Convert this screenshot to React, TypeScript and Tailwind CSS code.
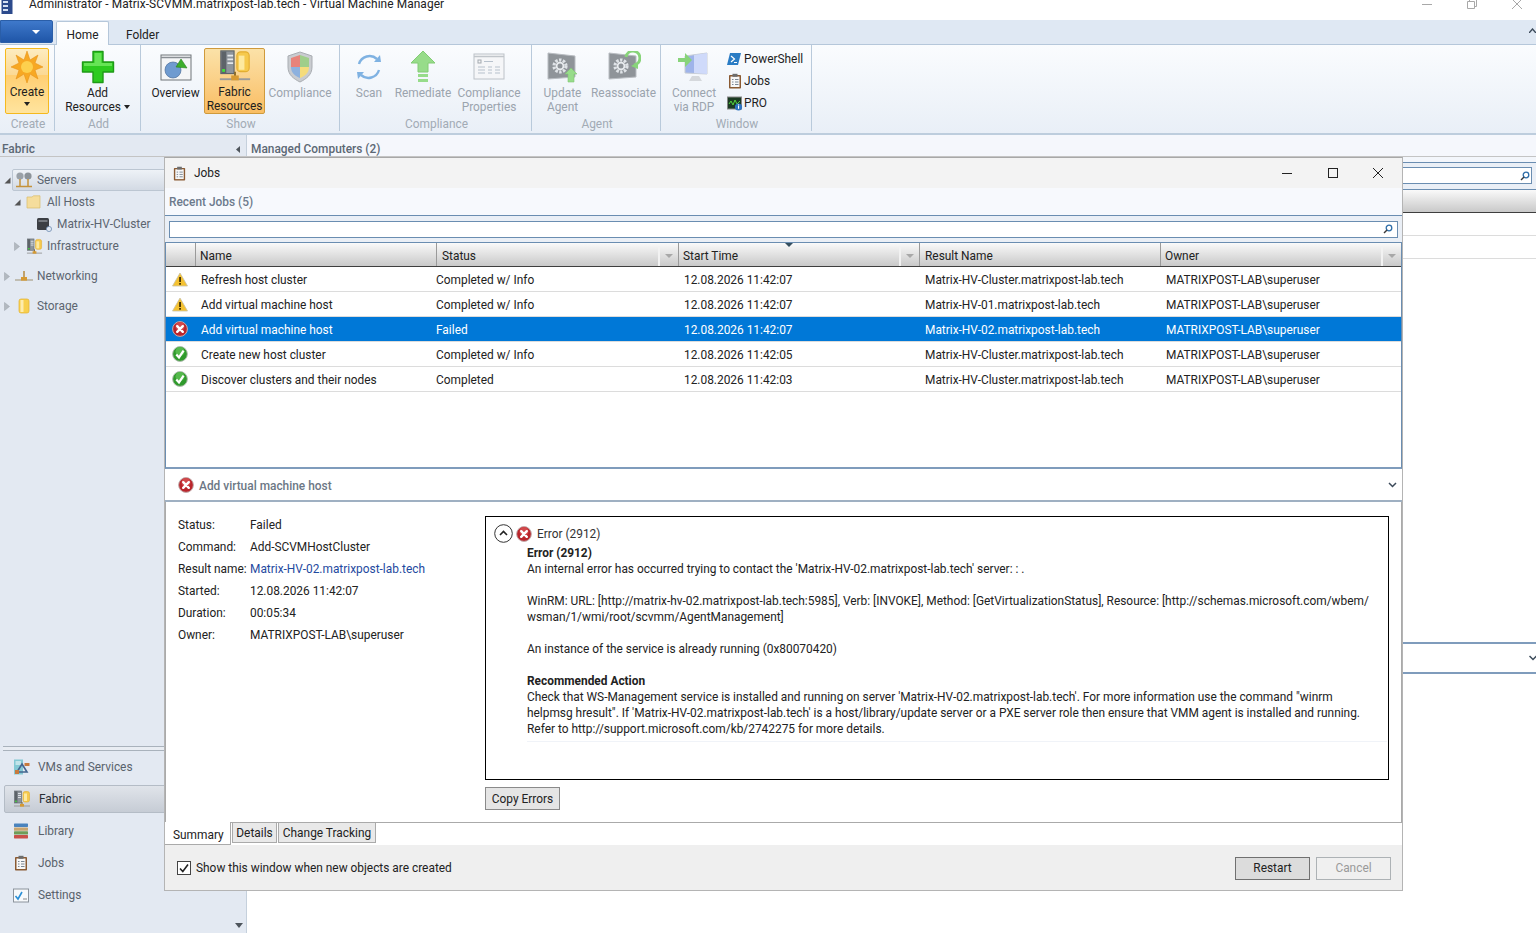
import React from "react";

type Status = "warn" | "error" | "ok";

const JOB_GRID = "grid grid-cols-[29px_241px_242px_241px_241px_1fr]";

const jobs: { status: Status; name: string; state: string; start: string; result: string }[] = [
  { status: "warn", name: "Refresh host cluster", state: "Completed w/ Info", start: "12.08.2026 11:42:07", result: "Matrix-HV-Cluster.matrixpost-lab.tech" },
  { status: "warn", name: "Add virtual machine host", state: "Completed w/ Info", start: "12.08.2026 11:42:07", result: "Matrix-HV-01.matrixpost-lab.tech" },
  { status: "error", name: "Add virtual machine host", state: "Failed", start: "12.08.2026 11:42:07", result: "Matrix-HV-02.matrixpost-lab.tech" },
  { status: "ok", name: "Create new host cluster", state: "Completed w/ Info", start: "12.08.2026 11:42:05", result: "Matrix-HV-Cluster.matrixpost-lab.tech" },
  { status: "ok", name: "Discover clusters and their nodes", state: "Completed", start: "12.08.2026 11:42:03", result: "Matrix-HV-Cluster.matrixpost-lab.tech" },
];

function StatusIcon({ status }: { status: Status }) {
  if (status === "warn")
    return (
      <svg width="16" height="15" viewBox="0 0 16 15">
        <path d="M8 1 L15.5 14 H0.5 Z" fill="#f5c231" stroke="#c9c2a8" strokeWidth="0.8" />
        <rect x="7.2" y="5" width="1.7" height="5" fill="#3a2a00" />
        <rect x="7.2" y="11" width="1.7" height="1.7" fill="#3a2a00" />
      </svg>
    );
  if (status === "error") return <ErrorIcon />;
  return (
    <svg width="16" height="16" viewBox="0 0 16 16">
      <circle cx="8" cy="8" r="7.4" fill="#2f9a2c" stroke="#b3bdb2" strokeWidth="1" />
      <circle cx="8" cy="5.5" r="4.5" fill="#55b94c" />
      <path d="M4.3 8.4 L7 11.4 L11.6 4.6" fill="none" stroke="#fff" strokeWidth="2.2" />
    </svg>
  );
}

function ErrorIcon() {
  return (
    <svg width="16" height="16" viewBox="0 0 16 16">
      <circle cx="8" cy="8" r="7.4" fill="#b9252b" stroke="#c2aeae" strokeWidth="1" />
      <circle cx="8" cy="5.5" r="4.5" fill="#d2484b" />
      <path d="M5.2 5.2 L10.8 10.8 M10.8 5.2 L5.2 10.8" stroke="#fff" strokeWidth="2.4" strokeLinecap="round" />
    </svg>
  );
}

function Clipboard({ size = 16 }: { size?: number }) {
  return (
    <svg width={size} height={size} viewBox="0 0 16 16">
      <rect x="2" y="2" width="12" height="13.5" rx="0.8" fill="#8a5a32" />
      <rect x="3.5" y="3.5" width="9" height="10.5" fill="#f7f7f7" />
      <rect x="5.5" y="0.8" width="5" height="3" fill="#6d6d6d" />
      <path d="M5 6.5 H6.5 M8 6.5 H11.5 M5 9 H6.5 M8 9 H11.5 M5 11.5 H6.5 M8 11.5 H11.5" stroke="#7b8794" strokeWidth="1" />
    </svg>
  );
}

function FabricIcon({ size = 18 }: { size?: number }) {
  return (
    <svg width={size} height={size} viewBox="0 0 18 18">
      <rect x="1.5" y="1" width="7" height="12" fill="#8e959c" stroke="#5f656b" strokeWidth="0.6" />
      <rect x="1.8" y="1.3" width="2.6" height="11.4" fill="#5d6369" />
      <path d="M5 3.5 H8 M5 5.5 H8 M5 7.5 H8" stroke="#e4e7ea" strokeWidth="0.9" />
      <rect x="2.2" y="10.6" width="1.5" height="1.5" fill="#41e03a" />
      <rect x="10" y="1.5" width="6.5" height="10.5" rx="2" fill="#f6c94c" stroke="#e3ae30" strokeWidth="0.6" />
      <rect x="11" y="3.5" width="3" height="7.5" fill="#fde99f" />
      <path d="M1 16 H17" stroke="#9a9a9a" strokeWidth="1" />
      <path d="M9 12 V15" stroke="#8a6a2a" strokeWidth="1" />
      <rect x="7" y="14" width="4" height="2.6" fill="#d69a33" />
    </svg>
  );
}

function TriangleOpen() {
  return (
    <svg width="7" height="7" viewBox="0 0 7 7">
      <path d="M6.5 0.5 V6.5 H0.5 Z" fill="#555" />
    </svg>
  );
}

function TriangleClosed() {
  return (
    <svg width="6" height="9" viewBox="0 0 6 9">
      <path d="M0.5 0.5 L5.5 4.5 L0.5 8.5 Z" fill="#b3b9c0" stroke="#9aa1a8" strokeWidth="0.5" />
    </svg>
  );
}

function Monitor({ children }: { children?: React.ReactNode }) {
  return (
    <svg width="34" height="32" viewBox="0 0 34 32">
      <path d="M2 2 L29 5 V26 L2 28 Z" fill="#8f9499" stroke="#b9bdc2" strokeWidth="1" />
      <circle cx="14" cy="15" r="6" fill="none" stroke="#dfe3e7" strokeWidth="3.2" strokeDasharray="2.4 1.4" />
      <circle cx="14" cy="15" r="3.4" fill="none" stroke="#e9ecef" strokeWidth="1.8" />
      {children}
    </svg>
  );
}

function RibbonButton({ icon, lines, disabled, className }: { icon: React.ReactNode; lines: React.ReactNode[]; disabled?: boolean; className: string }) {
  return (
    <div className={`flex flex-col items-center ${className} ${disabled ? "text-[#9ba4ae]" : "text-[#1e1e1e]"}`}>
      <div className="h-[37px] flex items-center justify-center">{icon}</div>
      <div className="leading-[13.5px] text-center whitespace-nowrap mt-[2px]">
        {lines.map((l, i) => (
          <div key={i}>{l}</div>
        ))}
      </div>
    </div>
  );
}

function RibbonGroup({ label, className, children }: { label: string; className: string; children: React.ReactNode }) {
  return (
    <div className={`flex flex-col shrink-0 ${className}`}>
      <div className="h-[72px] shrink-0 flex items-start pt-[3px] border-r border-[#b9cadb]">{children}</div>
      <div className="h-[14px] shrink-0 leading-[14px] text-center pl-[2px] text-[#a2abb5] border-r border-[#b9cadb]">{label}</div>
    </div>
  );
}

function Ribbon() {
  return (
    <div className="h-[90px] shrink-0 flex bg-gradient-to-b from-[#fafcfe] to-[#e9eff7] border-b-[2px] border-[#bdcddd]">
      <RibbonGroup label="Create" className="w-[55px]">
        <div className="ml-[5px] w-[44px] h-[66px] rounded-[2px] border border-[#f5b91e] bg-[linear-gradient(#fdecc0_0%,#fbd994_40%,#ffcf73_41%,#ffe49e_100%)] flex flex-col items-center text-[#1e1e1e]">
          <svg width="34" height="34" viewBox="0 0 34 34" className="mt-[1px]">
            <path d="M17 1 L20 10 L28 5 L25 13 L33 17 L25 20 L28 29 L20 24 L17 33 L14 24 L6 29 L9 20 L1 17 L9 13 L6 5 L14 10 Z" fill="#f7a823" stroke="#e28a12" strokeWidth="0.5" />
            <circle cx="17" cy="17" r="6" fill="#fdd04e" />
          </svg>
          <div className="leading-[14px] mt-[1px]">Create</div>
          <svg width="6" height="4" viewBox="0 0 6 4" className="mt-[3px]">
            <path d="M0 0 H6 L3 4 Z" fill="#222" />
          </svg>
        </div>
      </RibbonGroup>
      <RibbonGroup label="Add" className="w-[86px]">
        <RibbonButton
          className="w-[86px]"
          icon={
            <svg width="34" height="34" viewBox="0 0 34 34">
              <path d="M12 1.5 H22 V12 H32.5 V22 H22 V32.5 H12 V22 H1.5 V12 H12 Z" fill="#2dcb1f" stroke="#1f9a17" strokeWidth="1.4" strokeLinejoin="round" />
              <path d="M13.5 3 H20.5 V13 H31 V16 H3 V13 H13.5 Z" fill="#66e455" />
            </svg>
          }
          lines={[
            "Add",
            <span className="inline-flex items-center gap-[3px]">
              Resources
              <svg width="6" height="4" viewBox="0 0 6 4">
                <path d="M0 0 H6 L3 4 Z" fill="#222" />
              </svg>
            </span>,
          ]}
        />
      </RibbonGroup>
      <RibbonGroup label="Show" className="w-[199px]">
        <RibbonButton
          className="w-[57px] ml-[6px]"
          icon={
            <svg width="32" height="28" viewBox="0 0 32 28">
              <rect x="1" y="2" width="30" height="25" fill="#f5f6f7" stroke="#6f7478" />
              <path d="M1 4.5 H31" stroke="#8a8f94" strokeWidth="1.5" />
              <circle cx="13" cy="17" r="8" fill="#6f9bd0" stroke="#4d6f99" strokeWidth="0.7" />
              <path d="M16 14 L21 6 L27 15 Z" fill="#3cae2b" stroke="#2a7f1f" strokeWidth="0.6" />
            </svg>
          }
          lines={["Overview"]}
        />
        <div className="w-[61px] h-[66px] rounded-[2px] border border-[#cf9a3c] bg-gradient-to-b from-[#fbe2a8] to-[#f9bd62] flex flex-col items-center text-[#1e1e1e]">
          <FabricIcon size={34} />
          <div className="leading-[13.5px] text-center mt-[3px]">
            <div>Fabric</div>
            <div>Resources</div>
          </div>
        </div>
        <RibbonButton
          disabled
          className="w-[70px]"
          icon={
            <svg width="28" height="32" viewBox="0 0 28 32">
              <path d="M14 1 L26 5 V16 C26 24 20 28 14 31 C8 28 2 24 2 16 V5 Z" fill="#c9ccd0" stroke="#a9adb2" />
              <path d="M14 4 V16 H5 V7 Z" fill="#e8837a" />
              <path d="M14 4 L23 7 V16 H14 Z" fill="#9fce8a" />
              <path d="M5 16 H14 V27 C9 25 5 22 5 16 Z" fill="#8db1de" />
              <path d="M14 16 H23 C23 22 19 25 14 27 Z" fill="#f5dc7b" />
            </svg>
          }
          lines={["Compliance"]}
        />
      </RibbonGroup>
      <RibbonGroup label="Compliance" className="w-[192px]">
        <RibbonButton
          disabled
          className="w-[58px]"
          icon={
            <svg width="28" height="28" viewBox="0 0 28 28">
              <path d="M4 11 A11 11 0 0 1 22 6" fill="none" stroke="#7fb2e2" strokeWidth="2.4" />
              <path d="M24 17 A11 11 0 0 1 6 22" fill="none" stroke="#7fb2e2" strokeWidth="2.4" />
              <path d="M19 9 L26 9 L25 2 Z M9 19 L2 19 L3 26 Z" fill="#7fb2e2" />
            </svg>
          }
          lines={["Scan"]}
        />
        <RibbonButton
          disabled
          className="w-[50px]"
          icon={
            <svg width="26" height="34" viewBox="0 0 26 34">
              <path d="M13 1 L25 13 H18 V22 H8 V13 H1 Z" fill="#97dc8a" stroke="#82cc75" />
              <rect x="8" y="24" width="10" height="3" fill="#97dc8a" />
              <rect x="8" y="29" width="10" height="3" fill="#97dc8a" />
            </svg>
          }
          lines={["Remediate"]}
        />
        <RibbonButton
          disabled
          className="w-[82px]"
          icon={
            <svg width="32" height="27" viewBox="0 0 32 27">
              <rect x="1" y="1" width="30" height="25" fill="#f5f6f8" stroke="#bcc2c8" />
              <path d="M1 3.5 H31" stroke="#c0c5ca" strokeWidth="1.5" />
              <rect x="5" y="7" width="3" height="3" fill="none" stroke="#a3a9af" />
              <path d="M11 8.5 H20 M5 14 H12 M15 14 H19 M22 14 H27 M5 17 H12 M15 17 H19 M22 17 H27 M5 20 H12 M15 20 H19 M22 20 H27" stroke="#b7c1cc" strokeWidth="1" />
            </svg>
          }
          lines={["Compliance", "Properties"]}
        />
      </RibbonGroup>
      <RibbonGroup label="Agent" className="w-[129px]">
        <RibbonButton
          disabled
          className="w-[61px]"
          icon={
            <Monitor>
              <path d="M25 17 L31 23 H28 V31 H22 V23 H19 Z" fill="#97dc8a" stroke="#7fc872" strokeWidth="0.6" />
            </Monitor>
          }
          lines={["Update", "Agent"]}
        />
        <RibbonButton
          disabled
          className="w-[61px]"
          icon={
            <Monitor>
              <path d="M19 6 A7 7 0 1 1 27 14" fill="none" stroke="#88d47a" strokeWidth="3" />
              <path d="M24 15 L31 11 L31 18 Z" fill="#88d47a" />
            </Monitor>
          }
          lines={["Reassociate"]}
        />
      </RibbonGroup>
      <RibbonGroup label="Window" className="w-[151px]">
        <RibbonButton
          disabled
          className="w-[66px]"
          icon={
            <svg width="34" height="34" viewBox="0 0 34 34">
              <path d="M8 6 L30 3 V24 L8 23 Z" fill="#9fb4ea" stroke="#c9ced4" />
              <path d="M17 5 L30 3 V24 L17 23 Z" fill="#cfdafa" />
              <path d="M15 26 H22 L25 31 H12 Z" fill="#d5d8dc" />
              <path d="M1 8 H8 V3 L15 10 L8 17 V12 H1 Z" fill="#88d47a" />
            </svg>
          }
          lines={["Connect", "via RDP"]}
        />
        <div className="flex flex-col text-[#1e1e1e]">
          <div className="h-[22px] flex items-center gap-[3px]">
            <svg width="14" height="14" viewBox="0 0 14 14">
              <path d="M3 1 H14 L11 13 H0 Z" fill="#2a7cc4" />
              <path d="M4 4 L7.5 7 L4 10 M7 10.5 H10" fill="none" stroke="#fff" strokeWidth="1.2" />
            </svg>
            PowerShell
          </div>
          <div className="h-[22px] flex items-center gap-[1px]">
            <Clipboard />
            Jobs
          </div>
          <div className="h-[22px] flex items-center gap-[1px]">
            <svg width="16" height="15" viewBox="0 0 16 15">
              <rect x="0.5" y="1" width="14" height="12" fill="#1b3a22" stroke="#888" />
              <path d="M2 8 L4 5 L6 9 L8 4 L10 8 L13 5" fill="none" stroke="#52d33d" strokeWidth="1" />
              <circle cx="11.5" cy="11" r="3.6" fill="#2f74c0" />
              <rect x="11" y="9.8" width="1.1" height="3" fill="#fff" />
              <rect x="11" y="8.4" width="1.1" height="1" fill="#fff" />
            </svg>
            PRO
          </div>
        </div>
      </RibbonGroup>
    </div>
  );
}

function TreeRow({ pad, arrow, icon, label, selected, className = "" }: { pad: string; arrow?: React.ReactNode; icon: React.ReactNode; label: string; selected?: boolean; className?: string }) {
  return (
    <div className={`h-[22px] flex items-center ${pad} ${className}`}>
      <div className="w-[10px] flex justify-center shrink-0">{arrow}</div>
      <div
        className={`flex-1 h-full flex items-center gap-[3px] pl-[1px] whitespace-nowrap text-[#5c6570] border ${
          selected ? "border-[#bcc6d2] rounded-l-[2px] bg-gradient-to-b from-[#eef2f7] to-[#d3dae4]" : "border-transparent"
        }`}
      >
        <div className="w-[20px] h-[18px] flex items-center justify-center shrink-0">{icon}</div>
        {label}
      </div>
    </div>
  );
}

function NavRow({ icon, label, selected }: { icon: React.ReactNode; label: string; selected?: boolean }) {
  return (
    <div className="h-[32px] flex items-center pl-[4px]">
      <div
        className={`flex-1 h-[28px] flex items-center pl-[8px] gap-[8px] ${
          selected ? "border border-[#b4bcc6] rounded-l-[2px] bg-gradient-to-b from-[#e0e4ea] to-[#c6ccd5] text-[#2a2f35]" : "text-[#59626c]"
        }`}
      >
        <div className="w-[18px] h-[18px] flex items-center justify-center shrink-0">{icon}</div>
        {label}
      </div>
    </div>
  );
}

function Sidebar() {
  return (
    <div className="w-[247px] shrink-0 bg-[#e3e9f2] border-r border-[#c5d0dc] flex flex-col">
      <div className="pt-[12px]">
        <TreeRow
          pad="pl-[2px]"
          selected
          arrow={<TriangleOpen />}
          label="Servers"
          icon={
            <svg width="18" height="18" viewBox="0 0 18 18">
              <circle cx="5" cy="5" r="3.6" fill="#9aa1a8" />
              <circle cx="13" cy="5" r="3.6" fill="#8c9399" />
              <path d="M5 8 V15 M13 8 V15 M1 15.5 H17" stroke="#c5923a" strokeWidth="1.5" />
            </svg>
          }
        />
        <TreeRow
          pad="pl-[12px]"
          arrow={<TriangleOpen />}
          label="All Hosts"
          icon={
            <svg width="16" height="14" viewBox="0 0 16 14">
              <path d="M1 2 H6 L7.5 0.8 H14 V13 H1 Z" fill="#f5dd9c" stroke="#d8bb6c" strokeWidth="0.7" />
            </svg>
          }
        />
        <TreeRow
          pad="pl-[22px]"
          label="Matrix-HV-Cluster"
          icon={
            <svg width="16" height="16" viewBox="0 0 16 16">
              <rect x="1" y="2" width="12" height="12" rx="1.5" fill="#3c3f44" />
              <rect x="2.5" y="4" width="9" height="2" fill="#75797f" />
              <circle cx="13" cy="13" r="2.6" fill="#dfe7f2" stroke="#6484ac" strokeWidth="0.7" />
            </svg>
          }
        />
        <TreeRow pad="pl-[12px]" arrow={<TriangleClosed />} label="Infrastructure" icon={<FabricIcon size={17} />} />
        <TreeRow
          pad="pl-[2px]"
          arrow={<TriangleClosed />}
          label="Networking"
          className="mt-[8px]"
          icon={
            <svg width="18" height="12" viewBox="0 0 18 12">
              <path d="M0 10 H18" stroke="#a9a088" strokeWidth="1.2" />
              <path d="M9 1 V8" stroke="#b28534" strokeWidth="1.4" />
              <rect x="6" y="7" width="6" height="3.6" fill="#d69a33" />
            </svg>
          }
        />
        <TreeRow
          pad="pl-[2px]"
          arrow={<TriangleClosed />}
          label="Storage"
          className="mt-[8px]"
          icon={
            <svg width="12" height="16" viewBox="0 0 12 16">
              <rect x="1" y="1" width="10" height="14" rx="2" fill="#f8d04f" stroke="#e4b12e" strokeWidth="0.7" />
              <rect x="2.5" y="2" width="3" height="12" fill="#fdecae" />
            </svg>
          }
        />
      </div>
      <div className="flex-1" />
      <div className="h-[5px] mx-[3px] border-y border-[#a9b2bc] bg-[#e9edf3]" />
      <NavRow
        label="VMs and Services"
        icon={
          <svg width="17" height="16" viewBox="0 0 17 16">
            <rect x="1" y="0.5" width="9" height="15" fill="#84c9d4" />
            <path d="M2.5 3 H8 M2.5 5 H8" stroke="#fff" strokeWidth="1" />
            <path d="M9 5 L14 13 H4 Z" fill="none" stroke="#44658f" strokeWidth="1.6" />
            <rect x="11.5" y="4" width="5" height="3" fill="#c77a3d" />
            <rect x="2" y="11" width="4" height="4" fill="#c77a3d" />
          </svg>
        }
      />
      <NavRow label="Fabric" selected icon={<FabricIcon />} />
      <NavRow
        label="Library"
        icon={
          <svg width="16" height="16" viewBox="0 0 16 16">
            <rect x="1" y="0.5" width="14" height="3.4" rx="0.6" fill="#4a83bd" />
            <rect x="1" y="4.4" width="14" height="3.4" rx="0.6" fill="#c9a56f" />
            <rect x="1" y="8.3" width="14" height="3.2" rx="0.6" fill="#6f9c57" />
            <rect x="1" y="12" width="14" height="3.4" rx="0.6" fill="#c9504a" />
          </svg>
        }
      />
      <NavRow label="Jobs" icon={<Clipboard />} />
      <NavRow
        label="Settings"
        icon={
          <svg width="16" height="15" viewBox="0 0 16 15">
            <rect x="0.5" y="1" width="15" height="13" fill="#f7f9fb" stroke="#8b939c" />
            <path d="M2.5 8 L5 11 L9 4" fill="none" stroke="#2a8fd6" strokeWidth="1.6" />
            <path d="M10 11 H14" stroke="#888" strokeWidth="1" />
          </svg>
        }
      />
      <div className="h-[22px] flex justify-end items-end pb-[5px] pr-[3px]">
        <svg width="8" height="5" viewBox="0 0 8 5">
          <path d="M0 0 H8 L4 5 Z" fill="#4e555c" />
        </svg>
      </div>
    </div>
  );
}

function HeaderCell({ label, className, filter = true }: { label: string; className: string; filter?: boolean }) {
  return (
    <div className={`flex items-center justify-between border-l border-[#9a9a9a] text-[#222] ${className}`}>
      <span className="pt-[2px]">{label}</span>
      {filter && (
        <div className="w-[20px] h-[20px] mt-[2px] flex items-center justify-center border-l-[2px] border-[#f2f2f2]">
          <svg width="8" height="4" viewBox="0 0 8 4">
            <path d="M0 0 H8 L4 4 Z" fill="#a8a8a8" />
          </svg>
        </div>
      )}
    </div>
  );
}

function SearchGlass() {
  return (
    <svg width="10" height="10" viewBox="0 0 10 10">
      <circle cx="6" cy="4" r="2.8" fill="none" stroke="#2d6da8" strokeWidth="1.3" />
      <path d="M4 6 L1 9" stroke="#3a3a3a" strokeWidth="1.5" />
    </svg>
  );
}

function JobsWindow() {
  return (
    <div className="absolute left-[164px] top-[157px] w-[1239px] h-[734px] bg-white border border-[#b4b4b4] border-t-[#a8a8a8] flex flex-col text-[#222]">
      <div className="h-[30px] shrink-0 bg-[#f3f3f3] flex items-center pl-[7px]">
        <Clipboard size={15} />
        <span className="ml-[7px]">Jobs</span>
        <div className="ml-auto flex items-center">
          <svg width="46" height="12" viewBox="0 0 46 12">
            <path d="M1 6.5 H11" stroke="#222" strokeWidth="1" />
          </svg>
          <svg width="45" height="12" viewBox="0 0 45 12">
            <rect x="1.5" y="1.5" width="9" height="9" fill="none" stroke="#222" strokeWidth="1" />
          </svg>
          <svg width="30" height="12" viewBox="0 0 30 12">
            <path d="M1 1 L11 11 M11 1 L1 11" stroke="#222" strokeWidth="1" />
          </svg>
        </div>
      </div>
      <div className="h-[27px] shrink-0 bg-[#f7f9fd] flex items-center pl-[4px] text-[#6c7a8c] font-medium">Recent Jobs (5)</div>
      <div className="h-[28px] shrink-0 bg-[#eaeff6] border-y border-[#6a8db1] px-[4px] flex items-center">
        <div className="w-full h-[17px] bg-white border border-[#6a8db1] flex items-center justify-end pr-[4px]">
          <SearchGlass />
        </div>
      </div>
      <div className="h-[226px] shrink-0 border-x border-b-[2px] border-[#6a8db1] border-b-[#7f9cbc] flex flex-col">
        <div className={`${JOB_GRID} relative h-[24px] bg-gradient-to-b from-[#fafafa] to-[#c9c9c9] border-b border-[#3e3e3e]`}>
          <div />
          <HeaderCell label="Name" className="pl-[4px]" filter={false} />
          <HeaderCell label="Status" className="pl-[5px]" />
          <HeaderCell label="Start Time" className="pl-[4px]" />
          <HeaderCell label="Result Name" className="pl-[5px]" filter={false} />
          <HeaderCell label="Owner" className="pl-[4px]" />
          <svg width="8" height="4" viewBox="0 0 8 4" className="absolute left-[619px] top-0">
            <path d="M0 0 H8 L4 4 Z" fill="#354f5f" />
          </svg>
        </div>
        {jobs.map((job, i) => (
          <div
            key={i}
            className={`${JOB_GRID} h-[25px] items-center border-b border-[#dcdcdc] whitespace-nowrap ${
              job.status === "error" ? "bg-[#0078d7] text-white" : "text-[#222]"
            }`}
          >
            <div className="flex justify-center pr-[1px]">
              <StatusIcon status={job.status} />
            </div>
            <div className="pl-[6px] pt-[1px]">{job.name}</div>
            <div className="pt-[1px]">{job.state}</div>
            <div className="pl-[6px] pt-[1px]">{job.start}</div>
            <div className="pl-[6px] pt-[1px]">{job.result}</div>
            <div className="pl-[6px] pt-[1px]">MATRIXPOST-LAB\superuser</div>
          </div>
        ))}
      </div>
      <div className="h-[33px] shrink-0 flex items-center pl-[13px] pr-[5px] border-b-[2px] border-[#9fb0c2] gap-[5px]">
        <ErrorIcon />
        <span className="text-[#6c7785] font-medium pt-[3px]">Add virtual machine host</span>
        <svg width="9" height="6" viewBox="0 0 9 6" className="ml-auto">
          <path d="M1 1 L4.5 4.5 L8 1" fill="none" stroke="#3c4a5a" strokeWidth="1.5" />
        </svg>
      </div>
      <div className="h-[321px] shrink-0 flex border-b border-x border-[#aaaaaa] pl-[12px] pt-[11px]">
        <div className="w-[307px] shrink-0 pt-[1px]">
          {[
            ["Status:", "Failed"],
            ["Command:", "Add-SCVMHostCluster"],
            ["Result name:", "Matrix-HV-02.matrixpost-lab.tech"],
            ["Started:", "12.08.2026 11:42:07"],
            ["Duration:", "00:05:34"],
            ["Owner:", "MATRIXPOST-LAB\\superuser"],
          ].map(([k, v]) => (
            <div key={k} className="h-[22px] flex items-center whitespace-nowrap">
              <div className="w-[72px] shrink-0">{k}</div>
              <div className={k === "Result name:" ? "text-[#1f4aa0]" : ""}>{v}</div>
            </div>
          ))}
        </div>
        <div className="w-[904px] shrink-0 pt-[3px]">
          <div className="h-[264px] border border-black">
            <div className="h-[28px] flex items-center pl-[8px] pt-[5px] gap-[3px]">
              <svg width="19" height="19" viewBox="0 0 19 19">
                <circle cx="9.5" cy="9.5" r="8.8" fill="#fff" stroke="#333" strokeWidth="1" />
                <path d="M6 11 L9.5 7.5 L13 11" fill="none" stroke="#222" strokeWidth="1.6" />
              </svg>
              <ErrorIcon />
              <span className="ml-[2px] text-[#333]">Error (2912)</span>
            </div>
            <div className="ml-[41px] mr-[1px] leading-[16px] border-b border-[#f0f3f8] pb-[4px] whitespace-nowrap text-[#222]">
              <div className="font-bold">Error (2912)</div>
              <div>An internal error has occurred trying to contact the 'Matrix-HV-02.matrixpost-lab.tech' server: : .</div>
              <div className="h-[16px]" />
              <div>WinRM: URL: [http://matrix-hv-02.matrixpost-lab.tech:5985], Verb: [INVOKE], Method: [GetVirtualizationStatus], Resource: [http://schemas.microsoft.com/wbem/</div>
              <div>wsman/1/wmi/root/scvmm/AgentManagement]</div>
              <div className="h-[16px]" />
              <div>An instance of the service is already running (0x80070420)</div>
              <div className="h-[16px]" />
              <div className="font-bold">Recommended Action</div>
              <div>Check that WS-Management service is installed and running on server 'Matrix-HV-02.matrixpost-lab.tech'. For more information use the command "winrm</div>
              <div>helpmsg hresult". If 'Matrix-HV-02.matrixpost-lab.tech' is a host/library/update server or a PXE server role then ensure that VMM agent is installed and running.</div>
              <div>Refer to http://support.microsoft.com/kb/2742275 for more details.</div>
            </div>
          </div>
          <button className="mt-[7px] w-[75px] h-[23px] bg-[#e5e5e5] border border-[#8a8a8a] text-[#222]">Copy Errors</button>
        </div>
      </div>
      <div className="h-[22px] shrink-0 flex items-start">
        <div className="w-[66px] h-[23px] -mt-[1px] bg-white border-r border-b border-[#aaaaaa] flex items-center pl-[8px] pt-[4px]">Summary</div>
        <div className="ml-[1px] w-[45px] h-[21px] -mt-[1px] bg-[#e9e9e9] border border-[#aaaaaa] flex items-center justify-center">Details</div>
        <div className="ml-[1px] w-[98px] h-[21px] -mt-[1px] bg-[#e9e9e9] border border-[#aaaaaa] flex items-center justify-center">Change Tracking</div>
      </div>
      <div className="flex-1 bg-[#efefef] flex items-center pl-[12px] pr-[11px] pt-[1px]">
        <div className="w-[14px] h-[14px] border border-[#444] bg-white flex items-center justify-center">
          <svg width="12" height="12" viewBox="0 0 12 12">
            <path d="M2 6.5 L4.8 9.5 L10 2.5" fill="none" stroke="#222" strokeWidth="1.6" />
          </svg>
        </div>
        <span className="ml-[5px]">Show this window when new objects are created</span>
        <button className="ml-auto w-[75px] h-[23px] bg-[#dcdcdc] border border-[#707070] text-[#222]">Restart</button>
        <button className="ml-[6px] w-[75px] h-[23px] bg-[#f0f0f0] border border-[#adb2b5] text-[#9a9a9a]">Cancel</button>
      </div>
    </div>
  );
}

function BehindPane() {
  return (
    <div className="flex-1 flex flex-col bg-white">
      <div className="h-[6px] bg-[#f3f6fb] border-b border-[#6a8db1]" />
      <div className="h-[26px] bg-[#eaeff6] px-[4px] pt-[4px]">
        <div className="w-full h-[17px] bg-white border border-[#6a8db1] flex items-center justify-end pr-[1px]">
          <SearchGlass />
        </div>
      </div>
      <div className="h-[24px] border-t border-[#6a8db1] bg-gradient-to-b from-[#fafafa] to-[#c9c9c9] border-b border-b-[#3e3e3e]" />
      <div className="h-[23px] border-b border-[#dcdcdc]" />
      <div className="h-[23px] border-b border-[#dcdcdc]" />
      <div className="h-[383px]" />
      <div className="h-[32px] border-y-[2px] border-[#7f9cbc] flex items-center justify-end">
        <svg width="8" height="6" viewBox="0 0 8 6" className="-mr-[1px]">
          <path d="M0.5 1 L4 4.5 L7.5 1" fill="none" stroke="#3c4a5a" strokeWidth="1.5" />
        </svg>
      </div>
    </div>
  );
}

export default function App() {
  return (
    <div className="relative w-[1536px] h-[933px] overflow-hidden bg-white flex flex-col text-[11.9px] leading-[16px] font-['Roboto',sans-serif]">
      <div className="h-[20px] shrink-0 bg-white flex items-start relative">
        <svg width="12" height="15" viewBox="0 0 12 15" className="ml-[1px] -mt-[1px]">
          <rect x="0.5" y="0" width="11" height="15" fill="#2c4a8c" />
          <rect x="2" y="2" width="5" height="2" fill="#d5e0f2" />
          <rect x="2" y="6" width="5" height="2" fill="#d5e0f2" />
          <rect x="2" y="10" width="5" height="2" fill="#d5e0f2" />
        </svg>
        <span className="ml-[16px] -mt-[4px] text-[#222] tracking-[0.085px]">Administrator - Matrix-SCVMM.matrixpost-lab.tech - Virtual Machine Manager</span>
        <div className="ml-auto flex items-center -mt-[1px] pr-[14px] gap-[35px]">
          <svg width="10" height="10" viewBox="0 0 10 10">
            <path d="M0 5.5 H10" stroke="#a8a8a8" />
          </svg>
          <svg width="10" height="10" viewBox="0 0 10 10">
            <path d="M2.5 2.5 V0.5 H9.5 V7.5 H7.5 M0.5 2.5 H7.5 V9.5 H0.5 Z" fill="none" stroke="#a8a8a8" />
          </svg>
          <svg width="10" height="10" viewBox="0 0 10 10">
            <path d="M0 0 L10 10 M10 0 L0 10" stroke="#a8a8a8" />
          </svg>
        </div>
      </div>
      <div className="h-[25px] shrink-0 bg-[#dfe8f3] flex items-end border-b border-[#b5c7da] relative">
        <div className="w-[53px] h-[23px] mb-[1px] rounded-r-[2px] bg-gradient-to-b from-[#3f79cb] to-[#1f56a8] border border-[#2a5ea8] flex items-center justify-end pr-[12px]">
          <svg width="8" height="4" viewBox="0 0 8 4">
            <path d="M0 0 H8 L4 4 Z" fill="#fff" />
          </svg>
        </div>
        <div className="ml-[3px] w-[53px] h-[24px] -mb-[1px] pt-[3px] bg-gradient-to-b from-[#ffffff] to-[#fafcfe] border border-b-0 border-[#b5c7da] rounded-t-[2px] flex items-center justify-center text-[#222]">Home</div>
        <div className="ml-[17px] h-[24px] pt-[5px] flex items-center text-[#222]">Folder</div>
        <svg width="7" height="5" viewBox="0 0 7 5" className="absolute right-0 top-[8px]">
          <path d="M0 5 L3.5 1 L7 5" fill="none" stroke="#3c4a5a" strokeWidth="1.4" />
        </svg>
      </div>
      <Ribbon />
      <div className="h-[22px] shrink-0 flex border-b border-[#c4c4c4]">
        <div className="w-[247px] shrink-0 bg-[#e3e9f2] border-r border-[#c5d0dc] flex items-center justify-between pl-[2px] pr-[6px] pt-[7px] text-[#5c6875] font-medium">
          Fabric
          <svg width="4" height="7" viewBox="0 0 4 7">
            <path d="M4 0 V7 L0 3.5 Z" fill="#4e555c" />
          </svg>
        </div>
        <div className="flex-1 bg-[#f5f7fc] flex items-center pl-[4px] pt-[7px] text-[#5c6875] font-medium">Managed Computers (2)</div>
      </div>
      <div className="flex-1 flex min-h-0">
        <Sidebar />
        <BehindPane />
      </div>
      <JobsWindow />
    </div>
  );
}
